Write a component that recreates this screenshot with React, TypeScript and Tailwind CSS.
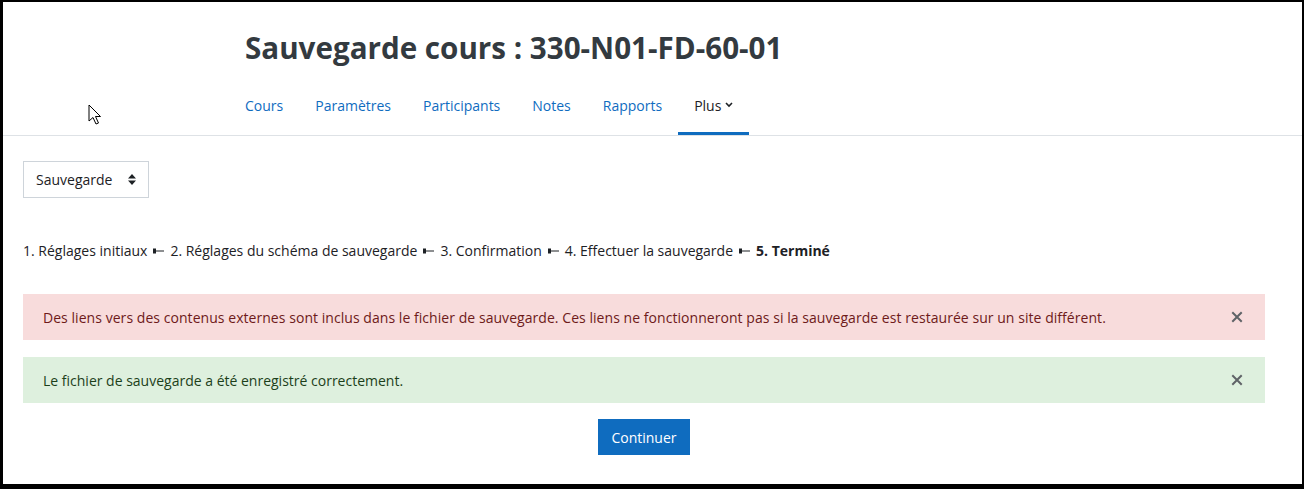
import React from "react";

const tabs = ["Cours", "Paramètres", "Participants", "Notes", "Rapports"];

const steps = [
  "1. Réglages initiaux",
  "2. Réglages du schéma de sauvegarde",
  "3. Confirmation",
  "4. Effectuer la sauvegarde",
];

const Sep = () => (
  <svg width="11" height="6" viewBox="0 0 11 6" className="mx-[6px] inline-block">
    <path d="M0 0.5 H3 V2.5 H11 V3.5 H3 V5.5 H0 Z" fill="#1d2125" />
  </svg>
);

const CloseX = () => (
  <svg width="12" height="12" viewBox="0 0 12 12">
    <path d="M2 2 L10 10 M10 2 L2 10" stroke="#5f6367" strokeWidth="2" strokeLinecap="square" />
  </svg>
);

const Cursor = () => (
  <svg width="16" height="22" viewBox="0 0 16 22" className="absolute left-[85px] top-[102px]">
    <path d="M1 1 V17 L5 13.5 L8 20 L10.5 19 L7.5 12.5 H12.5 Z" fill="#fff" stroke="#000" strokeWidth="1" strokeLinejoin="round" />
  </svg>
);

export default function App() {
  return (
    <div className="relative w-[1304px] h-[489px] overflow-hidden border-t-2 border-l-[3px] border-r-2 border-b-[5px] border-black bg-white text-[#1d2125] [font-family:'Open_Sans',sans-serif]">
      <Cursor />

      {/* Header */}
      <div className="border-b border-[#dee2e6]">
        <div className="pl-[242px] pt-[28px]">
          <h1 className="text-[29.6px] font-bold leading-[36px] text-[#333a40]">
            Sauvegarde cours : 330-N01-FD-60-01
          </h1>
          <nav className="-ml-[16px] mt-[9px] flex h-[60px] items-stretch">
            {tabs.map((t) => (
              <a key={t} className="flex items-center px-4 text-[14px] text-[#0f6cbf]">
                {t}
              </a>
            ))}
            <a className="flex items-center gap-1 border-b-[3px] border-[#0f6cbf] px-4 pt-[3px] text-[14px] text-[#1d2125]">
              Plus
              <svg width="8" height="6" viewBox="0 0 8 6">
                <path d="M1 1 L4 4 L7 1" stroke="#1d2125" strokeWidth="1.6" fill="none" />
              </svg>
            </a>
          </nav>
        </div>
      </div>

      {/* Page content */}
      <div className="pl-[20px] pr-[37px] pt-[25px]">
        <div className="flex h-[37px] w-[126px] items-center justify-between border border-[#ced4da] pl-3 pr-3 text-[14px]">
          <span>Sauvegarde</span>
          <svg width="8" height="11" viewBox="0 0 8 11">
            <path d="M4 0 L8 4.5 H0 Z M0 6.5 H8 L4 11 Z" fill="#1d2125" />
          </svg>
        </div>

        <div className="mt-[42px] flex items-center text-[14px] leading-[22px]">
          {steps.map((s) => (
            <React.Fragment key={s}>
              <span>{s}</span>
              <Sep />
            </React.Fragment>
          ))}
          <span className="font-bold">5. Terminé</span>
        </div>

        <div className="mt-[32px] flex h-[46px] items-center justify-between bg-[#f8dcdc] pl-5 pr-[22px] text-[14px] text-[#6e1a1a]">
          <span className="tracking-[0.05px]">
            Des liens vers des contenus externes sont inclus dans le fichier de sauvegarde. Ces liens ne fonctionneront pas si la sauvegarde est restaurée sur un site différent.
          </span>
          <CloseX />
        </div>

        <div className="mt-[17px] flex h-[46px] items-center justify-between bg-[#def0de] pl-5 pr-[22px] text-[14px] text-[#1c3f1a]">
          <span>Le fichier de sauvegarde a été enregistré correctement.</span>
          <CloseX />
        </div>

        <div className="mt-[16px] flex justify-center">
          <button className="h-[36px] w-[92px] bg-[#0f6cbf] text-[14px] text-white">Continuer</button>
        </div>
      </div>
    </div>
  );
}
